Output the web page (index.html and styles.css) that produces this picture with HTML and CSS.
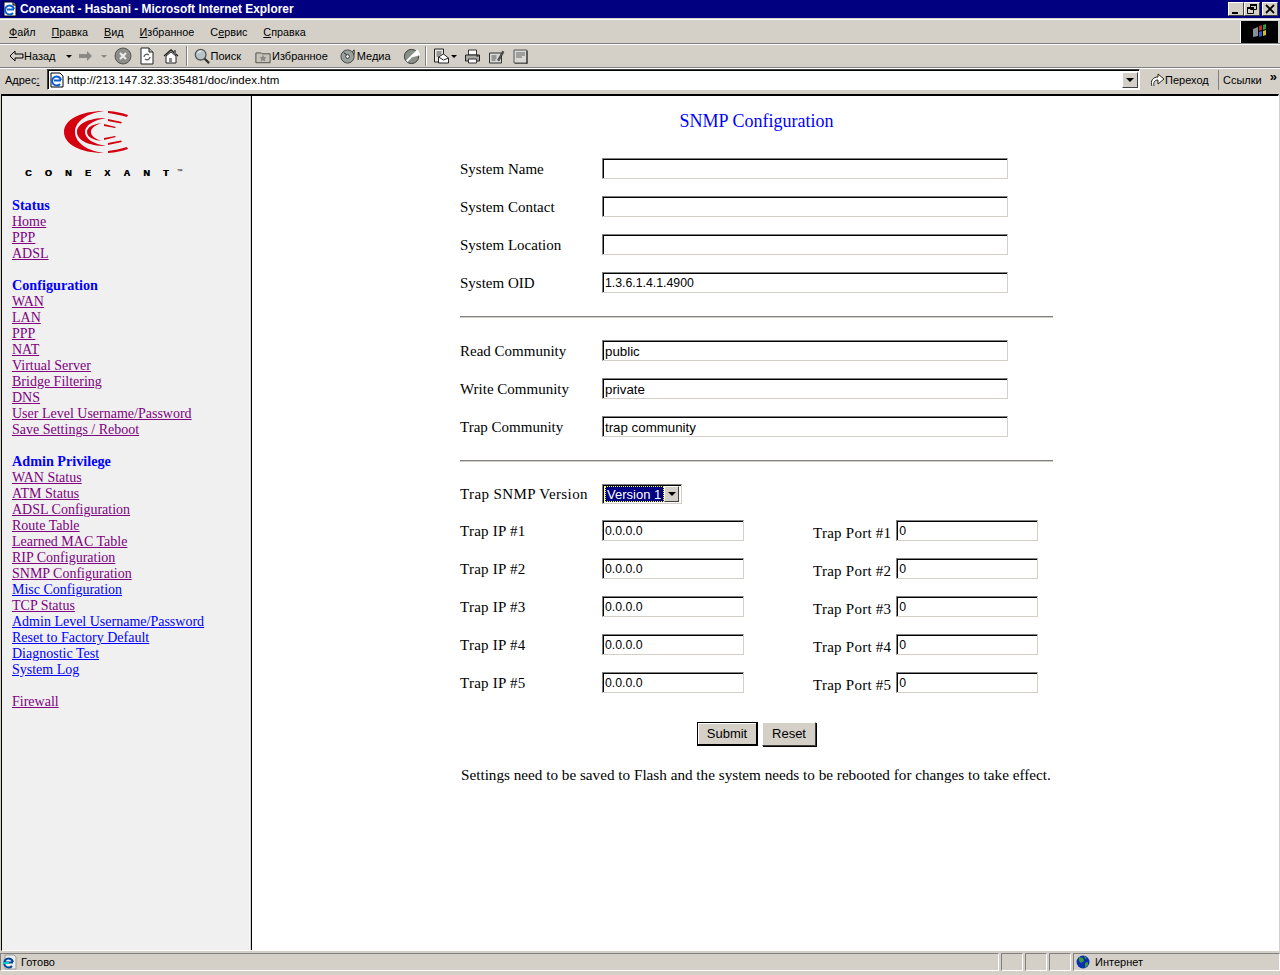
FILE: index.html
```html
<!DOCTYPE html>
<html lang="ru">
<head>
<meta charset="utf-8">
<title>Conexant - Hasbani - Microsoft Internet Explorer</title>
<link rel="stylesheet" href="styles.css">
</head>
<body>
<div class="window">
  <header class="titlebar">
    <svg class="title-icon" width="16" height="16" viewBox="0 0 16 16"><path d="M2 1h9l3 3v11H2z" fill="#fff" stroke="#000"/><path d="M11 1v3h3" fill="#ccc" stroke="#000"/><path d="M12 8a4.500 4.500 0 1 0-1 4M5 8.500h7" fill="none" stroke="#0a5fd0" stroke-width="2"/></svg>
    <span class="title-text">Conexant - Hasbani - Microsoft Internet Explorer</span>
    <div class="win-buttons">
      <span class="win-btn"><svg width="10" height="10" viewBox="0 0 10 10"><path d="M1 8h6v2H1z"/></svg></span>
      <span class="win-btn"><svg width="10" height="10" viewBox="0 0 10 10"><path d="M3.500.5h6v5h-6zM.5 3.500h6v6h-6z" fill="none" stroke="#000"/><path d="M3 0h7v2H3zM0 3h7v2H0z"/></svg></span>
      <span class="win-btn win-close"><svg width="10" height="10" viewBox="0 0 10 10"><path d="M1 1l8 8M9 1L1 9" stroke="#000" stroke-width="1.800"/></svg></span>
    </div>
  </header>

  <nav class="menubar">
    <div class="menus">
      <span><u>Ф</u>айл</span><span><u>П</u>равка</span><span><u>В</u>ид</span><span><u>И</u>збранное</span><span>С<u>е</u>рвис</span><span><u>С</u>правка</span>
    </div>
    <div class="throbber">
      <svg width="18" height="18" viewBox="0 0 18 18"><path d="M2 6l5-2v9l-5 1z" fill="#8a8f95"/><path d="M8 3l3-1v5l-3 1z" fill="#c02a1a"/><path d="M12 2l3-1v5l-3 1z" fill="#2f9a3a"/><path d="M8 9l3-1v5l-3 1z" fill="#2a5fd0"/><path d="M12 8l3-1v5l-3 1z" fill="#d8c020"/></svg>
    </div>
  </nav>

  <div class="toolbar">
    <span class="tool tool-back"><svg width="16" height="14" viewBox="0 0 16 14"><path d="M7 2L2 7l5 5V9h8V5H7z" fill="#d4d0c8" stroke="#000"/></svg>Назад<i class="caret"></i></span>
    <span class="tool tool-off"><svg width="16" height="14" viewBox="0 0 16 14"><path d="M9 2l5 5-5 5V9H1V5h8z" fill="#8a8a86"/></svg><i class="caret caret-off"></i></span>
    <svg class="ico ico-m7" width="18" height="18" viewBox="0 0 18 18"><circle cx="9" cy="9" r="8" fill="#8c8c88" stroke="#555"/><path d="M6 6l6 6M12 6l-6 6" stroke="#eee" stroke-width="2"/></svg>
    <svg class="ico ico-m7" width="16" height="18" viewBox="0 0 16 18"><path d="M2 1h8l4 4v12H2z" fill="#fff" stroke="#222"/><path d="M10 1v4h4" fill="#bbb" stroke="#222"/><path d="M5 10a3 3 0 0 1 5-2M11 10a3 3 0 0 1-5 2" fill="none" stroke="#666" stroke-width="1.400"/></svg>
    <svg class="ico" width="16" height="16" viewBox="0 0 16 16"><path d="M1 8l7-6 7 6" fill="none" stroke="#222" stroke-width="1.400"/><path d="M3 8v7h10V8L8 4z" fill="#fff" stroke="#222"/><path d="M6 10h3v5H6z" fill="#888"/><path d="M11 2h2v4h-2z" fill="#666"/></svg>
    <i class="sep sep-a"></i>
    <span class="tool tool-search"><svg width="16" height="16" viewBox="0 0 18 18"><circle cx="7.500" cy="7.500" r="6" fill="#b8c4c8" stroke="#555" stroke-width="1.500"/><path d="M12 12l5 5" stroke="#333" stroke-width="2.500"/><path d="M4 6a4 4 0 0 1 4-2" stroke="#fff" fill="none"/></svg>Поиск</span>
    <span class="tool tool-fav"><svg width="16" height="15" viewBox="0 0 18 16"><path d="M1 4h6l1 1h9v10H1z" fill="#c8c4b8" stroke="#444"/><path d="M9 6l1.200 2.500 2.800.3-2 1.900.5 2.800-2.500-1.300-2.500 1.300.5-2.800-2-1.900 2.800-.3z" fill="#888"/></svg>Избранное</span>
    <span class="tool tool-media"><svg width="17" height="17" viewBox="0 0 18 18"><circle cx="8" cy="9" r="7" fill="#9aa09c" stroke="#444"/><circle cx="8" cy="9" r="2" fill="#eee" stroke="#333"/><path d="M4 5l3 2M13 4l2-2v5" stroke="#222" fill="none"/></svg>Медиа</span>
    <svg class="ico ico-flat" width="17" height="17" viewBox="0 0 18 18"><circle cx="9" cy="9" r="7.500" fill="#8a9088" stroke="#333"/><path d="M9 9l6-6a8 8 0 0 1 2 4zM9 9L4 14" stroke="#fff" stroke-width="2" fill="#fff"/></svg>
    <i class="sep sep-b"></i>
    <svg class="ico ico-flat" width="17" height="16" viewBox="0 0 16 16"><path d="M1 1h9v13H1z" fill="#e8e8e4" stroke="#222"/><path d="M3 4h5M3 6h5M3 8h3" stroke="#444"/><path d="M5 9l5-3 5 4v5H5z" fill="#fff" stroke="#222"/><path d="M5 9l5 3 5-2" fill="none" stroke="#222"/></svg><i class="caret caret-tight"></i>
    <svg class="ico ico-m7" width="17" height="15" viewBox="0 0 16 15"><path d="M4 1h8v5H4z" fill="#fff" stroke="#333"/><path d="M1 6h14v6H1z" fill="#a8a8a4" stroke="#222"/><path d="M4 10h8v4H4z" fill="#fff" stroke="#333"/><path d="M12 7h2" stroke="#000"/></svg>
    <svg class="ico ico-m7" width="17" height="15" viewBox="0 0 16 15"><path d="M1 4h12v10H1z" fill="#d8d8d4" stroke="#333"/><path d="M3 7h5M3 9h5M3 11h4" stroke="#555"/><path d="M9 11l5-9 1.500 1-5 9z" fill="#555" stroke="#222" stroke-width=".5"/></svg>
    <svg class="ico" width="15" height="15" viewBox="0 0 15 15"><path d="M1 1h13v13H1z" fill="#d8d8d4" stroke="#555"/><path d="M3 4h9M3 6h9M3 8h6" stroke="#666"/><path d="M14 2v13H2" fill="none" stroke="#222"/></svg>
  </div>

  <div class="addressbar">
    <span class="addr-label">Адрес<u>:</u></span>
    <div class="addr-field">
      <svg width="16" height="16" viewBox="0 0 16 16"><path d="M2 1h9l3 3v11H2z" fill="#fff" stroke="#000"/><path d="M12 8a4.500 4.500 0 1 0-1 4M5 8.500h7" fill="none" stroke="#0a5fd0" stroke-width="2"/></svg>
      <span class="addr-url">http://213.147.32.33:35481/doc/index.htm</span>
      <span class="addr-drop"><i class="caret caret-dark"></i></span>
    </div>
    <span class="go"><svg width="15" height="16" viewBox="0 0 15 16"><path d="M2 14C0 9 3 5 8 5V2l6 5-6 5V8C5 8 3 10 4 14" fill="#fff" stroke="#222"/></svg>Переход</span>
    <span class="links">Ссылки<b class="chev">»</b></span>
  </div>

  <main class="frames">
    <aside class="side">
      <div class="logo">
        <svg width="66" height="44" viewBox="0 0 66 44">
          <g fill="#d40010">
            <path d="M40 1C16 1 0 10 0 22s16 21 40 21C24 41 11 33 11 22S24 3 40 1z"/>
            <path d="M44 1c8 .5 14 2 20 4l-1 2c-6-2-13-3-19-4zM44 43c8-.5 14-2 20-4l-1-2c-6 2-13 3-19 4z"/>
            <path d="M42 8C24 8 13 14 13 22s11 14 29 14C30 34 21 29 21 22s9-12 21-14z"/>
            <path d="M44 9l14 3-1 1.500-13-2.500zM44 35l14-3-1-1.500-13 2.500z"/>
            <path d="M38 13c-9 1-15 4-15 9s6 8 15 9c-7-2-11-5-11-9s4-7 11-9z"/>
            <path d="M40 14l12 3-1 1-11-2zM40 30l12-3-1-1-11 2z"/>
          </g>
        </svg>
        <div class="logo-word"><span class="logo-letters">CONEXAN</span>T<sup>™</sup></div>
      </div>
      <section class="group">
        <h3>Status</h3>
        <a class="v">Home</a><a class="v">PPP</a><a class="v">ADSL</a>
      </section>
      <section class="group">
        <h3>Configuration</h3>
        <a class="v">WAN</a><a class="v">LAN</a><a class="v">PPP</a><a class="v">NAT</a><a class="v">Virtual Server</a><a class="v">Bridge Filtering</a><a class="v">DNS</a><a class="v">User Level Username/Password</a><a class="v">Save Settings / Reboot</a>
      </section>
      <section class="group">
        <h3>Admin Privilege</h3>
        <a class="v">WAN Status</a><a class="v">ATM Status</a><a class="v">ADSL Configuration</a><a class="v">Route Table</a><a class="v">Learned MAC Table</a><a class="v">RIP Configuration</a><a class="v">SNMP Configuration</a><a class="n">Misc Configuration</a><a class="v">TCP Status</a><a class="n">Admin Level Username/Password</a><a class="n">Reset to Factory Default</a><a class="n">Diagnostic Test</a><a class="n">System Log</a>
      </section>
      <section class="group">
        <a class="v">Firewall</a>
      </section>
    </aside>
    <div class="divider"></div>
    <section class="content">
      <h1>SNMP Configuration</h1>
      <form class="form">
        <div class="row"><label>System Name</label><input class="wide" value=""></div>
        <div class="row"><label>System Contact</label><input class="wide" value=""></div>
        <div class="row"><label>System Location</label><input class="wide" value=""></div>
        <div class="row"><label>System OID</label><input class="wide num" value="1.3.6.1.4.1.4900"></div>
        <hr>
        <div class="row"><label>Read Community</label><input class="wide" value="public"></div>
        <div class="row"><label>Write Community</label><input class="wide" value="private"></div>
        <div class="row"><label>Trap Community</label><input class="wide" value="trap community"></div>
        <hr>
        <div class="row row-version"><label>Trap SNMP Version</label>
          <div class="select"><span class="select-val"><span>Version 1</span></span><span class="select-btn"><i class="caret caret-dark"></i></span></div>
        </div>
        <div class="row row-trap"><label>Trap IP #1</label><input class="ip num" value="0.0.0.0"><label class="port">Trap Port #1</label><input class="pt num" value="0"></div>
        <div class="row row-trap"><label>Trap IP #2</label><input class="ip num" value="0.0.0.0"><label class="port">Trap Port #2</label><input class="pt num" value="0"></div>
        <div class="row row-trap"><label>Trap IP #3</label><input class="ip num" value="0.0.0.0"><label class="port">Trap Port #3</label><input class="pt num" value="0"></div>
        <div class="row row-trap"><label>Trap IP #4</label><input class="ip num" value="0.0.0.0"><label class="port">Trap Port #4</label><input class="pt num" value="0"></div>
        <div class="row row-trap"><label>Trap IP #5</label><input class="ip num" value="0.0.0.0"><label class="port">Trap Port #5</label><input class="pt num" value="0"></div>
        <div class="buttons"><button type="button" class="btn btn-default">Submit</button><button type="button" class="btn">Reset</button></div>
        <p class="note">Settings need to be saved to Flash and the system needs to be rebooted for changes to take effect.</p>
      </form>
    </section>
  </main>

  <footer class="status">
    <div class="st-main"><svg width="16" height="16" viewBox="0 0 16 16"><path d="M3 1h9l2 2v12H3z" fill="#eee" stroke="#999"/><path d="M11 8a4.500 4.500 0 1 0-1 4M3 8.500h8" fill="none" stroke="#049" stroke-width="2"/><path d="M1 9h6" stroke="#0cc" stroke-width="2"/></svg><span>Готово</span></div>
    <div class="st-cell"></div><div class="st-cell"></div><div class="st-cell"></div>
    <div class="st-zone"><svg width="14" height="14" viewBox="0 0 14 14"><circle cx="7" cy="7" r="6.500" fill="#0a2fb0"/><path d="M3 2l4 1 1 3-3 2-2-2zM9 8l3-1 0 3-3 3z" fill="#3c9a3c"/><path d="M8 1l3 2-2 1z" fill="#3c9a3c"/></svg><span>Интернет</span></div>
  </footer>
</div>
</body>
</html>
```
FILE: styles.css
```css
* { box-sizing: border-box; }
html, body { margin: 0; padding: 0; }
body { width: 1280px; height: 975px; background: #d4d0c8; overflow: hidden; font-family: "Liberation Sans", Arial, sans-serif; font-size: 11px; color: #000; }
.window { height: 975px; display: flex; flex-direction: column; }

.titlebar { height: 18px; background: #000080; color: #fff; display: flex; align-items: center; padding: 0 2px; flex: none; }
.title-icon { flex: none; margin-right: 2px; }
.title-text { font-weight: bold; font-size: 11.900px; flex: 1; white-space: nowrap; }
.win-buttons { display: flex; }
.win-btn { width: 16px; height: 14px; background: #d4d0c8; display: flex; align-items: center; justify-content: center; border: 1px solid; border-color: #fff #404040 #404040 #fff; }
.win-close { margin-left: 2px; }

.menubar { height: 25px; flex: none; display: flex; align-items: stretch; border-top: 1px solid #fff; margin-top: 1px; border-bottom: 1px solid #808080; font-size: 10.800px; }
.menus { flex: 1; display: flex; align-items: center; padding: 1px 0 0 9px; gap: 16px; }
.throbber { width: 38px; background: #000; margin: 1px 2px 0 0; display: flex; align-items: center; justify-content: center; border-left: 1px solid #fff; }

.toolbar { height: 23px; flex: none; display: flex; align-items: center; padding-left: 8px; border-top: 1px solid #fff; }
.tool { display: inline-flex; align-items: center; gap: 1px; white-space: nowrap; }
.tool-back { gap: 0; }
.tool-off { margin-left: 6px; gap: 3px; }
.tool-search { margin-right: 14px; }
.tool-fav { margin-right: 12px; }
.tool-media { margin-right: 12px; gap: 0; }
.ico { flex: none; margin-left: 8px; }
.ico-m7 { margin-left: 7px; }
.ico-flat { margin-left: 0; }
.sep { width: 2px; height: 20px; margin-right: 6px; border-left: 1px solid #808080; border-right: 1px solid #fff; flex: none; }
.sep-a { margin-left: 7px; }
.sep-b { margin-left: 5px; }
.caret { display: inline-block; width: 0; height: 0; border: 3px solid transparent; border-top: 3px solid #000; border-bottom: 0; margin-left: 10px; flex: none; }
.caret-off { border-top-color: #888; margin-left: 4px; }
.caret-tight { margin-left: 1px; }
.caret-dark { margin: 0; border-width: 4px 4px 0; border-top-color: #000; }

.addressbar { height: 24px; flex: none; display: flex; align-items: center; padding-left: 5px; border-top: 1px solid #808080; box-shadow: inset 0 1px 0 #fff; }
.addr-label { width: 42px; flex: none; }
.addr-field { width: 1093px; height: 21px; flex: none; background: #fff; display: flex; align-items: center; padding: 0 0 0 1px; border: 1px solid; border-color: #404040 #fff #fff #404040; box-shadow: inset 1px 1px 0 #000; }
.addr-url { flex: 1; margin-left: 2px; font-size: 11.500px; }
.addr-drop { width: 16px; height: 16px; background: #d4d0c8; display: flex; align-items: center; justify-content: center; border: 1px solid; border-color: #fff #404040 #404040 #fff; margin-right: 1px; }
.go { width: 79px; flex: none; display: flex; align-items: center; gap: 0; padding-left: 10px; height: 20px; border-right: 1px solid #808080; }
.links { flex: 1; padding-left: 4px; white-space: nowrap; position: relative; }
.chev { position: absolute; right: 3px; top: -5px; font-size: 13px; }

.frames { height: 857px; flex: none; display: flex; margin: 3px 1px 0 1px; border: 1px solid; border-color: #000 #fff #fff #000; border-top: 2px solid #000; background: #fff; }
.side { width: 247px; flex: none; background: #f0f0f0; padding: 0 0 0 10px; font-family: "Liberation Serif", "Times New Roman", serif; font-size: 14px; line-height: 16px; }
.logo { height: 102px; display: flex; flex-direction: column; padding: 14px 0 0 0; }
.logo svg { margin-left: 52px; flex: none; }
.logo-word { font-family: "Liberation Sans", Arial, sans-serif; font-weight: bold; font-size: 9px; margin: 14px 0 0 13px; line-height: 10px; white-space: nowrap; text-shadow: .4px 0 #000; }
.logo-letters { letter-spacing: 13.300px; }
.logo-word sup { font-size: 6px; font-weight: normal; line-height: 0; vertical-align: 3px; margin-left: 8px; text-shadow: none; }
.group { margin-bottom: 16px; display: flex; flex-direction: column; align-items: flex-start; }
.group h3 { margin: -1px 0 1px; color: #0000ff; font-size: 14.200px; font-weight: bold; line-height: 16px; }
.group a { text-decoration: underline; cursor: pointer; white-space: nowrap; }
.v { color: #800080; }
.n { color: #0000ff; }
.divider { width: 3px; flex: none; background: #d4d0c8; border-right: 1px solid #000; border-left: 1px solid #f8f8f8; }
.content { flex: 1; background: #fff; font-family: "Liberation Serif", "Times New Roman", serif; font-size: 15px; padding-left: 208px; }
h1 { margin: 0; padding-top: 16px; width: 593px; text-align: center; color: #0000ff; font-size: 18px; font-weight: normal; line-height: 19px; }
.form { width: 593px; padding-top: 19px; }
.row { height: 38px; display: flex; align-items: center; }
.row label { width: 142px; flex: none; white-space: nowrap; line-height: 18px; }
.row input { height: 21px; margin: 0 0 1px 0; padding: 1px 0 0 2px; background: #fff; font-family: "Liberation Sans", Arial, sans-serif; font-size: 13.300px; color: #000; border: 1px solid; border-color: #808080 #d4d0c8 #d4d0c8 #808080; box-shadow: inset 1px 1px 0 #000; border-radius: 0; outline: 0; }
.row input.num { font-size: 12.300px; }
.wide { width: 406px; }
.ip { width: 142px; }
.pt { width: 142px; }
.row-trap label { letter-spacing: .25px; }
.row label.port { width: auto; margin-left: 69px; margin-right: 5px; padding-top: 3px; }
hr { margin: 14px 0; height: 2px; border: 0; border-top: 1px solid #808080; border-bottom: 1px solid #d4d0c8; }
.row-version { height: 36px; }
.row-version label { letter-spacing: .4px; }
.select { width: 80px; height: 20px; display: flex; align-items: center; background: #fff; padding: 2px; border: 1px solid; border-color: #808080 #d4d0c8 #d4d0c8 #808080; box-shadow: inset 1px 1px 0 #000; font-family: "Liberation Sans", Arial, sans-serif; font-size: 13px; }
.select-val { flex: 1; background: #000080; color: #fff; height: 16px; line-height: 15px; border: 1px dotted #ff0; padding-left: 1px; overflow: hidden; }
.select-btn { width: 15px; height: 16px; background: #d4d0c8; display: flex; align-items: center; justify-content: center; border: 1px solid; border-color: #fff #404040 #404040 #fff; }
.buttons { display: flex; justify-content: center; gap: 4px; margin-top: 20px; }
.btn { height: 24px; padding: 0 0 1px; background: #d4d0c8; font-family: "Liberation Sans", Arial, sans-serif; font-size: 13px; color: #000; border: 1px solid; border-color: #fff #404040 #404040 #fff; box-shadow: 1px 1px 0 #000; border-radius: 0; width: 54px; }
.btn-default { width: 61px; padding-bottom: 0; border-color: #000; border-width: 1px 2px 2px 1px; box-shadow: inset 1px 1px 0 #fff; }
.note { margin: 20px 0 0 1px; line-height: 18px; white-space: nowrap; font-size: 15.200px; }

.status { flex: 1; display: flex; gap: 2px; padding: 2px 0 3px 0; }
.status > div { height: 18px; border: 1px solid; border-color: #808080 #fff #fff #808080; display: flex; align-items: center; }
.st-main { width: 999px; gap: 3px; padding-left: 1px; }
.st-cell { width: 22px; }
.st-zone { flex: 1; gap: 5px; padding-left: 2px; }
```
